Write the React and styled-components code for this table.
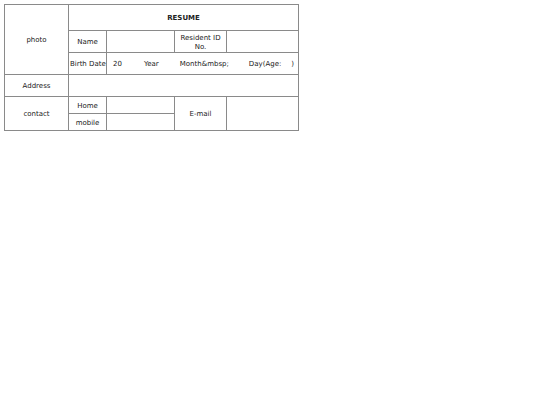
import React from "react";
import styled, { createGlobalStyle } from "styled-components";

const Global = createGlobalStyle`
  html, body { margin: 0; padding: 0; background: #fff; }
  body { font-family: "DejaVu Sans", Verdana, sans-serif; }
`;

const Page = styled.div`
  padding: 4px;
`;

const Table = styled.table`
  border-collapse: collapse;
  width: 294px;
  table-layout: fixed;
  font-family: "DejaVu Sans", Verdana, sans-serif;
  font-size: 7px;
  color: #222;
`;

const Row = styled.tr`
  height: ${(p) => p.$h}px;
`;

const Cell = styled.td`
  border: 1px solid #8a8a8a;
  padding: 2px 1px 0;
  text-align: ${(p) => (p.$left ? "left" : "center")};
  vertical-align: middle;
  font-weight: ${(p) => (p.$bold ? "bold" : "normal")};
  line-height: 9px;
  white-space: nowrap;
`;

const Wrap = styled(Cell)`
  white-space: normal;
`;

const DateLine = styled.div`
  display: flex;
  align-items: center;
  padding-left: 5px;
`;

const DatePart = styled.span`
  margin-left: ${(p) => p.$gap || 0}px;
`;

export default function App() {
  return (
    <>
      <Global />
      <Page>
        <Table>
          <colgroup>
            <col style={{ width: 64 }} />
            <col style={{ width: 38 }} />
            <col style={{ width: 68 }} />
            <col style={{ width: 52 }} />
            <col style={{ width: 72 }} />
          </colgroup>
          <tbody>
            <Row $h={26}>
              <Cell rowSpan={3}>photo</Cell>
              <Cell colSpan={4} $bold>RESUME</Cell>
            </Row>
            <Row $h={22}>
              <Cell>Name</Cell>
              <Cell />
              <Wrap>Resident ID No.</Wrap>
              <Cell />
            </Row>
            <Row $h={22}>
              <Cell>Birth Date</Cell>
              <Cell colSpan={3} $left>
                <DateLine>
                  <DatePart>20</DatePart>
                  <DatePart $gap={22}>Year</DatePart>
                  <DatePart $gap={21}>Month&amp;mbsp;</DatePart>
                  <DatePart $gap={20}>Day(Age:</DatePart>
                  <DatePart $gap={10}>)</DatePart>
                </DateLine>
              </Cell>
            </Row>
            <Row $h={22}>
              <Cell>Address</Cell>
              <Cell colSpan={4} />
            </Row>
            <Row $h={17}>
              <Cell rowSpan={2}>contact</Cell>
              <Cell>Home</Cell>
              <Cell />
              <Cell rowSpan={2}>E-mail</Cell>
              <Cell rowSpan={2} />
            </Row>
            <Row $h={17}>
              <Cell>mobile</Cell>
              <Cell />
            </Row>
          </tbody>
        </Table>
      </Page>
    </>
  );
}
